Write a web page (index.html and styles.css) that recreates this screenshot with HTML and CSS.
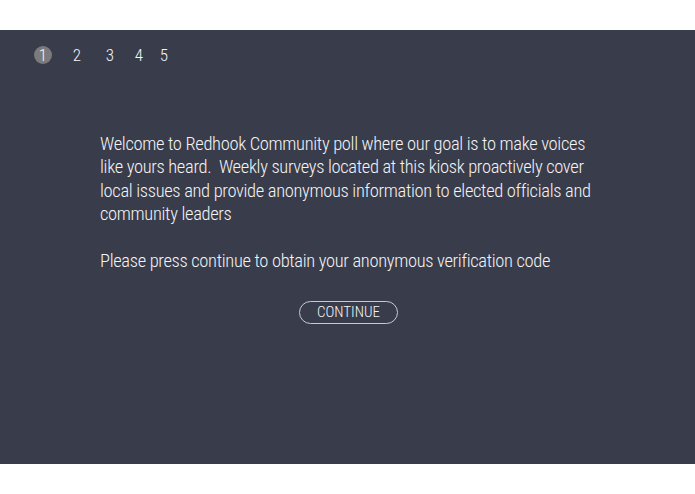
FILE: index.html
```html
<!DOCTYPE html>
<html>
<head>
  <meta charset="utf-8">
  <meta name="viewport" content="width=device-width, initial-scale=1">
  <title>Redhook Community Poll</title>
  <link rel="stylesheet" href="styles.css">
</head>
<body>
  <div class="kiosk">
    <nav class="steps">
      <span class="step current">1</span>
      <span class="step">2</span>
      <span class="step">3</span>
      <span class="step">4</span>
      <span class="step">5</span>
    </nav>

    <main class="intro">
      <p>Welcome to Redhook Community poll where our goal is to make voices like yours heard.&nbsp; Weekly surveys located at this kiosk proactively cover local issues and provide anonymous information to elected officials and community leaders</p>
      <p>Please press continue to obtain your anonymous verification code</p>
      <div class="actions">
        <button class="continue" type="button">CONTINUE</button>
      </div>
    </main>
  </div>
</body>
</html>
```
FILE: styles.css
```css
body {
  margin: 0;
  padding: 30px 0;
  background: #fff;
  font-family: Roboto, "Liberation Sans", sans-serif;
  font-stretch: condensed;
  color: #f4f4f6;
}
.kiosk {
  height: 434px;
  background: #393c4a;
  box-sizing: border-box;
  padding: 16px 0 0;
}
.steps {
  display: flex;
  align-items: center;
  height: 18px;
  padding-left: 34px;
  font-size: 17px;
  font-weight: 300;
}
.step {
  width: 18px;
  line-height: 18px;
  text-align: center;
}
.step.current {
  height: 18px;
  border-radius: 50%;
  background: #7b7b7d;
}
.step:nth-child(1) { margin-right: 16px; }
.step:nth-child(2) { margin-right: 15px; }
.step:nth-child(3) { margin-right: 11px; }
.step:nth-child(4) { margin-right: 7px; }

.intro {
  width: 500px;
  margin: 69px 0 0 100px;
  font-size: 18.5px;
  font-weight: 300;
  line-height: 23.3px;
  letter-spacing: -0.33px;
}
.intro p {
  margin: 0 0 24px;
}
.actions {
  display: flex;
  justify-content: center;
  margin-top: 28px;
  padding-right: 3px;
}
.continue {
  width: 99px;
  height: 23px;
  padding: 0;
  border: 1px solid #c9cad0;
  border-radius: 12px;
  background: transparent;
  color: #f4f4f6;
  font: inherit;
  font-size: 15px;
  line-height: 21px;
  letter-spacing: 0;
}
```
